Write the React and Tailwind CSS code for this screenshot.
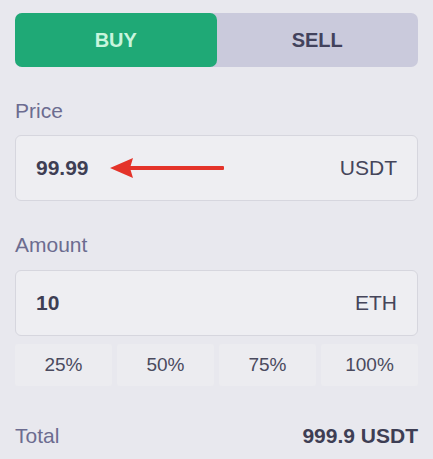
export default function App() {
  const percents = ['25%', '50%', '75%', '100%']

  return (
    <div className="min-h-[459px] w-[433px] bg-[#e8e8ee] px-[15px] pt-[13px] font-['Liberation_Sans',Arial,sans-serif]">
      {/* Buy / Sell toggle */}
      <div className="flex h-[54px] rounded-[7px] bg-[#cacadc]">
        <button className="flex-1 rounded-[7px] bg-[#1fa976] text-[20px] font-bold text-[#c8f5dd]">
          BUY
        </button>
        <button className="flex-1 text-[20px] font-bold text-[#42425c]">
          SELL
        </button>
      </div>

      {/* Price */}
      <div className="mt-[33px] text-[21px] leading-[22px] text-[#6c6c90]">Price</div>
      <div className="mt-[13px] flex h-[66px] items-center rounded-[6px] border border-[#d6d6de] bg-[#eeeef2] px-[20px]">
        <span className="text-[21px] font-bold text-[#3e3e54]">99.99</span>
        <svg width="114" height="22" viewBox="0 0 114 22" className="ml-[21px]">
          <polygon points="0,11 23,1 20,11 23,21" fill="#e4332a" />
          <rect x="18" y="9" width="96" height="4" rx="1" fill="#e4332a" />
        </svg>
        <span className="ml-auto text-[21px] text-[#45455a]">USDT</span>
      </div>

      {/* Amount */}
      <div className="mt-[33px] text-[21px] leading-[22px] text-[#6c6c90]">Amount</div>
      <div className="mt-[14px] flex h-[66px] items-center rounded-[6px] border border-[#d6d6de] bg-[#eeeef2] px-[20px]">
        <span className="text-[21px] font-bold text-[#3e3e54]">10</span>
        <span className="ml-auto text-[21px] text-[#45455a]">ETH</span>
      </div>

      <div className="mt-[8px] grid grid-cols-4 gap-[5px]">
        {percents.map(p => (
          <button
            key={p}
            className="h-[42px] rounded-[3px] bg-[#ececf0] text-[19px] text-[#4a4a5e]"
          >
            {p}
          </button>
        ))}
      </div>

      {/* Total */}
      <div className="mt-[38px] flex items-center justify-between leading-[23px]">
        <span className="text-[21px] text-[#6c6c90]">Total</span>
        <span className="text-[21px] font-bold text-[#3e3e54]">999.9 USDT</span>
      </div>
    </div>
  )
}
